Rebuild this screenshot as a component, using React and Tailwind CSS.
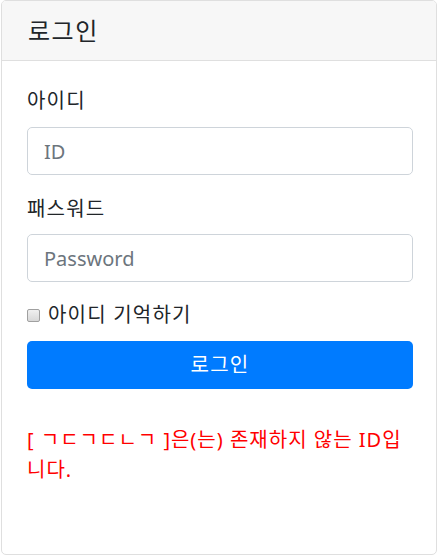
import React from 'react';

const font = { fontFamily: '"Noto Sans", "Noto Sans CJK KR", sans-serif' };

export default function App() {
  return (
    <div className="w-[442px] h-[556px] bg-white" style={font}>
      <div className="ml-[1px] w-[436px] h-[555px] border border-[#dfdfdf] rounded-[5px] overflow-hidden flex flex-col">
        {/* 카드 헤더 */}
        <div className="h-[60px] bg-[#f7f7f7] border-b border-[#dfdfdf] flex items-center px-[26px]">
          <h4 className="text-[24px] leading-none tracking-[1.5px] text-[#212529]">로그인</h4>
        </div>

        {/* 카드 본문 */}
        <div className="pl-[25px] pr-[23px] pt-[25px] text-[#212529]">
          <label className="block text-[20px] leading-[30px] tracking-[1.2px] mb-[11px]">아이디</label>
          <input
            className="block w-full h-[48px] px-[16px] text-[20px] border border-[#ced4da] rounded-[5px] placeholder:text-[#6c757d] outline-none"
            placeholder="ID"
          />

          <label className="block text-[20px] leading-[30px] tracking-[1.2px] mt-[19px] mb-[10px]">패스워드</label>
          <input
            type="password"
            className="block w-full h-[48px] px-[16px] text-[20px] border border-[#ced4da] rounded-[5px] placeholder:text-[#6c757d] outline-none"
            placeholder="Password"
          />

          <div className="flex items-center gap-[8px] mt-[18px] h-[30px]">
            <span className="w-[13px] h-[13px] rounded-[2px] border border-[#a0a0a0] bg-gradient-to-b from-[#f0f0f0] to-[#d8d8d8]"></span>
            <span className="text-[20px] leading-[30px] tracking-[1.2px]">아이디 기억하기</span>
          </div>

          <button className="mt-[11px] w-full h-[48px] bg-[#007bff] text-white text-[20px] tracking-[1.2px] rounded-[5px]">
            로그인
          </button>

          <p className="mt-[36px] text-[20px] leading-[30px] tracking-[1px] text-[#ff0000]">
            [ ㄱㄷㄱㄷㄴㄱ ]은(는) 존재하지 않는 ID입니다.
          </p>
        </div>
      </div>
    </div>
  );
}
